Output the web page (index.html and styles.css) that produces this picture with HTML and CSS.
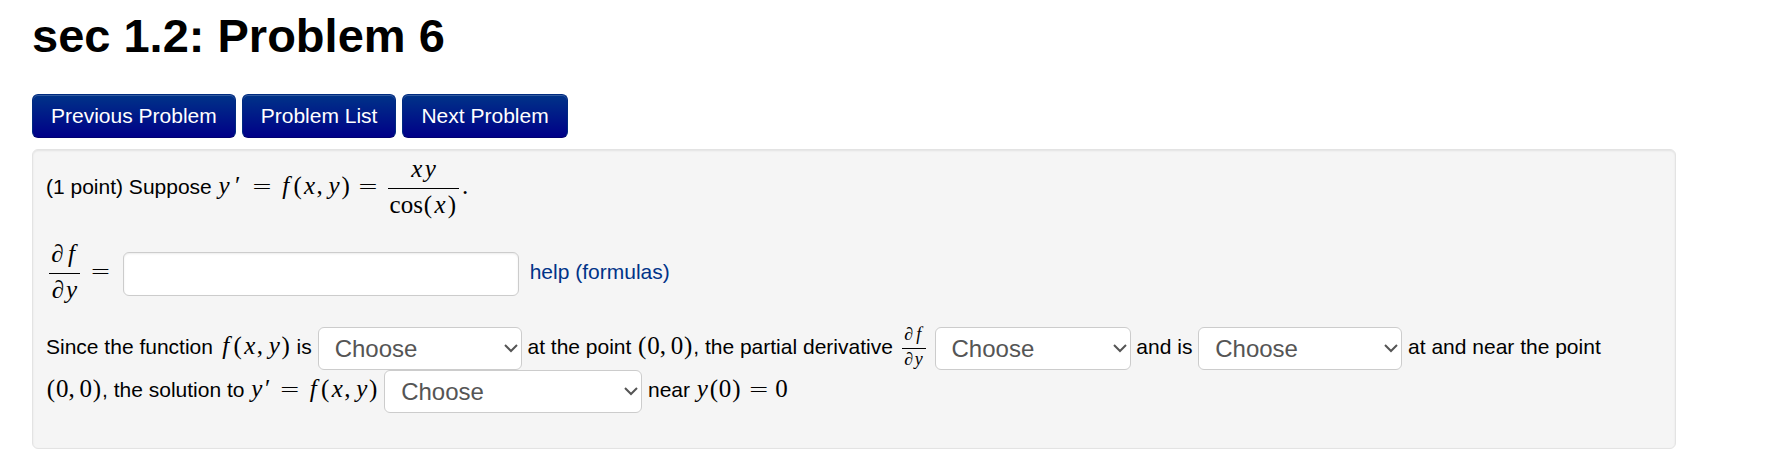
FILE: index.html
```html
<!DOCTYPE html>
<html lang="en">
<head>
  <meta charset="UTF-8">
  <title>sec 1.2: Problem 6</title>
  <link rel="stylesheet" href="styles.css">
</head>
<body>
  <h1>sec 1.2: Problem 6</h1>

  <nav class="problem-nav">
    <button type="button" class="btn">Previous Problem</button>
    <button type="button" class="btn">Problem List</button>
    <button type="button" class="btn">Next Problem</button>
  </nav>

  <form class="problem">
    <div class="row">
      (1 point) Suppose
      <span class="math"><i class="y">y</i><span class="prime wide">′</span><span class="eq">=</span><i class="f">f</i><b>(</b><i>x</i><span class="comma">,</span><i class="y">y</i><b>)</b><span class="eq">=</span><span class="frac"><span class="num"><i>x</i><i class="y">y</i></span><span class="den">cos<b>(</b><i>x</i><b>)</b></span></span><span class="dot">.</span></span>
    </div>

    <div class="row">
      <label class="math" for="answer"><span class="frac"><span class="num"><i>∂</i><i class="f">f</i></span><span class="den"><i>∂</i><i class="y">y</i></span></span><span class="eq">=</span></label>
      <input type="text" id="answer" class="answer">
      <a href="#" class="help">help (formulas)</a>
    </div>

    <div class="row statement">
      Since the function
      <span class="math"><i class="f">f</i><b>(</b><i>x</i><span class="comma">,</span><i class="y">y</i><b>)</b></span>
      is
      <span class="choice">
        <select aria-label="continuity of f"><option>Choose</option></select>
        <svg viewBox="0 0 14 9"><path d="M1 1l6 6 6-6"/></svg>
      </span>
      at the point
      <span class="nowrap"><span class="math"><b>(</b>0<span class="comma">,</span>0<b>)</b></span>,</span>
      the partial derivative
      <span class="math"><span class="frac small"><span class="num"><i>∂</i><i class="f">f</i></span><span class="den"><i>∂</i><i class="y">y</i></span></span></span>
      <span class="choice narrow">
        <select aria-label="partial derivative exists"><option>Choose</option></select>
        <svg viewBox="0 0 14 9"><path d="M1 1l6 6 6-6"/></svg>
      </span>
      and is
      <span class="choice">
        <select aria-label="continuity of the partial derivative"><option>Choose</option></select>
        <svg viewBox="0 0 14 9"><path d="M1 1l6 6 6-6"/></svg>
      </span>
      at and near the point
      <span class="nowrap"><span class="math"><b>(</b>0<span class="comma">,</span>0<b>)</b></span>,</span>
      the solution to
      <span class="math"><i class="y">y</i><span class="prime">′</span><span class="eq">=</span><i class="f">f</i><b>(</b><i>x</i><span class="comma">,</span><i class="y">y</i><b>)</b></span>
      <span class="choice wide">
        <select aria-label="existence and uniqueness"><option>Choose</option></select>
        <svg viewBox="0 0 14 9"><path d="M1 1l6 6 6-6"/></svg>
      </span>
      near
      <span class="math"><i class="y">y</i><b>(</b>0<b>)</b><span class="eq">=</span>0</span>
    </div>
  </form>
</body>
</html>
```
FILE: styles.css
```css
body {
  margin: 0;
  padding: 6px 96px 8px 32px;
  background: #fff;
  color: #000;
  font-family: "Liberation Sans", Arial, sans-serif;
  font-size: 21px;
  line-height: 30px;
}

h1 {
  margin: 0 0 28px;
  font-size: 47px;
  line-height: 60px;
}

.problem-nav {
  display: flex;
  gap: 6px;
  margin-bottom: 11px;
}

.btn {
  padding: 6px 18px;
  border: 1px solid #002a80;
  border-bottom-color: #000070;
  border-radius: 6px;
  background: linear-gradient(#003388, #000088);
  box-shadow: inset 0 1px 0 rgba(255, 255, 255, 0.2);
  color: #fff;
  font-family: inherit;
  font-size: 21px;
  line-height: 30px;
}

.problem {
  padding: 7px 13px 35px;
  border: 1px solid #e3e3e3;
  border-radius: 6px;
  background: #f5f5f5;
  box-shadow: inset 0 1px 2px rgba(0, 0, 0, 0.08);
}

.row {
  margin-bottom: 22px;
}

.statement {
  margin: 0;
  line-height: 30px;
}

.nowrap {
  white-space: nowrap;
}

/* formulas */
.math {
  font-family: "Liberation Serif", "Times New Roman", serif;
  font-size: 25px;
  line-height: 24px;
  white-space: nowrap;
}

.math i,
.math b,
.comma,
.prime,
.eq {
  display: inline-block;
  text-align: center;
}

.math i {
  width: 14px;
}

.math .y {
  width: 13px;
}

.math b {
  width: 10px;
  font-weight: normal;
}

.math .comma {
  width: 11px;
  text-align: left;
}

.prime {
  width: 9px;
}

.prime.wide {
  width: 14px;
}

.eq {
  width: 20px;
  margin: 0 7px;
  font-family: "DejaVu Sans", sans-serif;
  font-weight: 200;
}

.frac {
  display: inline-flex;
  flex-direction: column;
  text-align: center;
  vertical-align: middle;
  margin: 0 3px;
}

.num {
  padding-bottom: 7px;
  border-bottom: 1px solid #000;
}

.den {
  padding: 4px 2px 3px;
}

.small {
  font-size: 18px;
  line-height: 15px;
}

.small i,
.small .f,
.small .y {
  width: 10px;
}

.small .num {
  padding-bottom: 6px;
}

.small .den {
  padding: 3px 2px;
}

/* controls */
.answer {
  box-sizing: border-box;
  width: 396px;
  height: 44px;
  margin: 0 5px 0 0;
  padding: 6px 9px;
  border: 1px solid #ccc;
  border-radius: 6px;
  background: #fff;
  box-shadow: inset 0 1px 2px rgba(0, 0, 0, 0.08);
  font: inherit;
  vertical-align: middle;
}

.help {
  color: #003388;
  text-decoration: none;
}

.choice {
  display: inline-block;
  position: relative;
  width: 204px;
  height: 43px;
  vertical-align: middle;
}

.choice.narrow {
  width: 196px;
}

.choice.wide {
  width: 258px;
}

.choice select {
  display: block;
  appearance: none;
  box-sizing: border-box;
  width: 100%;
  height: 43px;
  padding: 0 30px 0 16px;
  border: 1px solid #ccc;
  border-radius: 6px;
  background: #fff;
  color: #555;
  font-family: inherit;
  font-size: 24px;
}

.choice svg {
  position: absolute;
  top: 17px;
  right: 4px;
  width: 14px;
  height: 9px;
  fill: none;
  stroke: #555;
  stroke-width: 2;
  pointer-events: none;
}
```
